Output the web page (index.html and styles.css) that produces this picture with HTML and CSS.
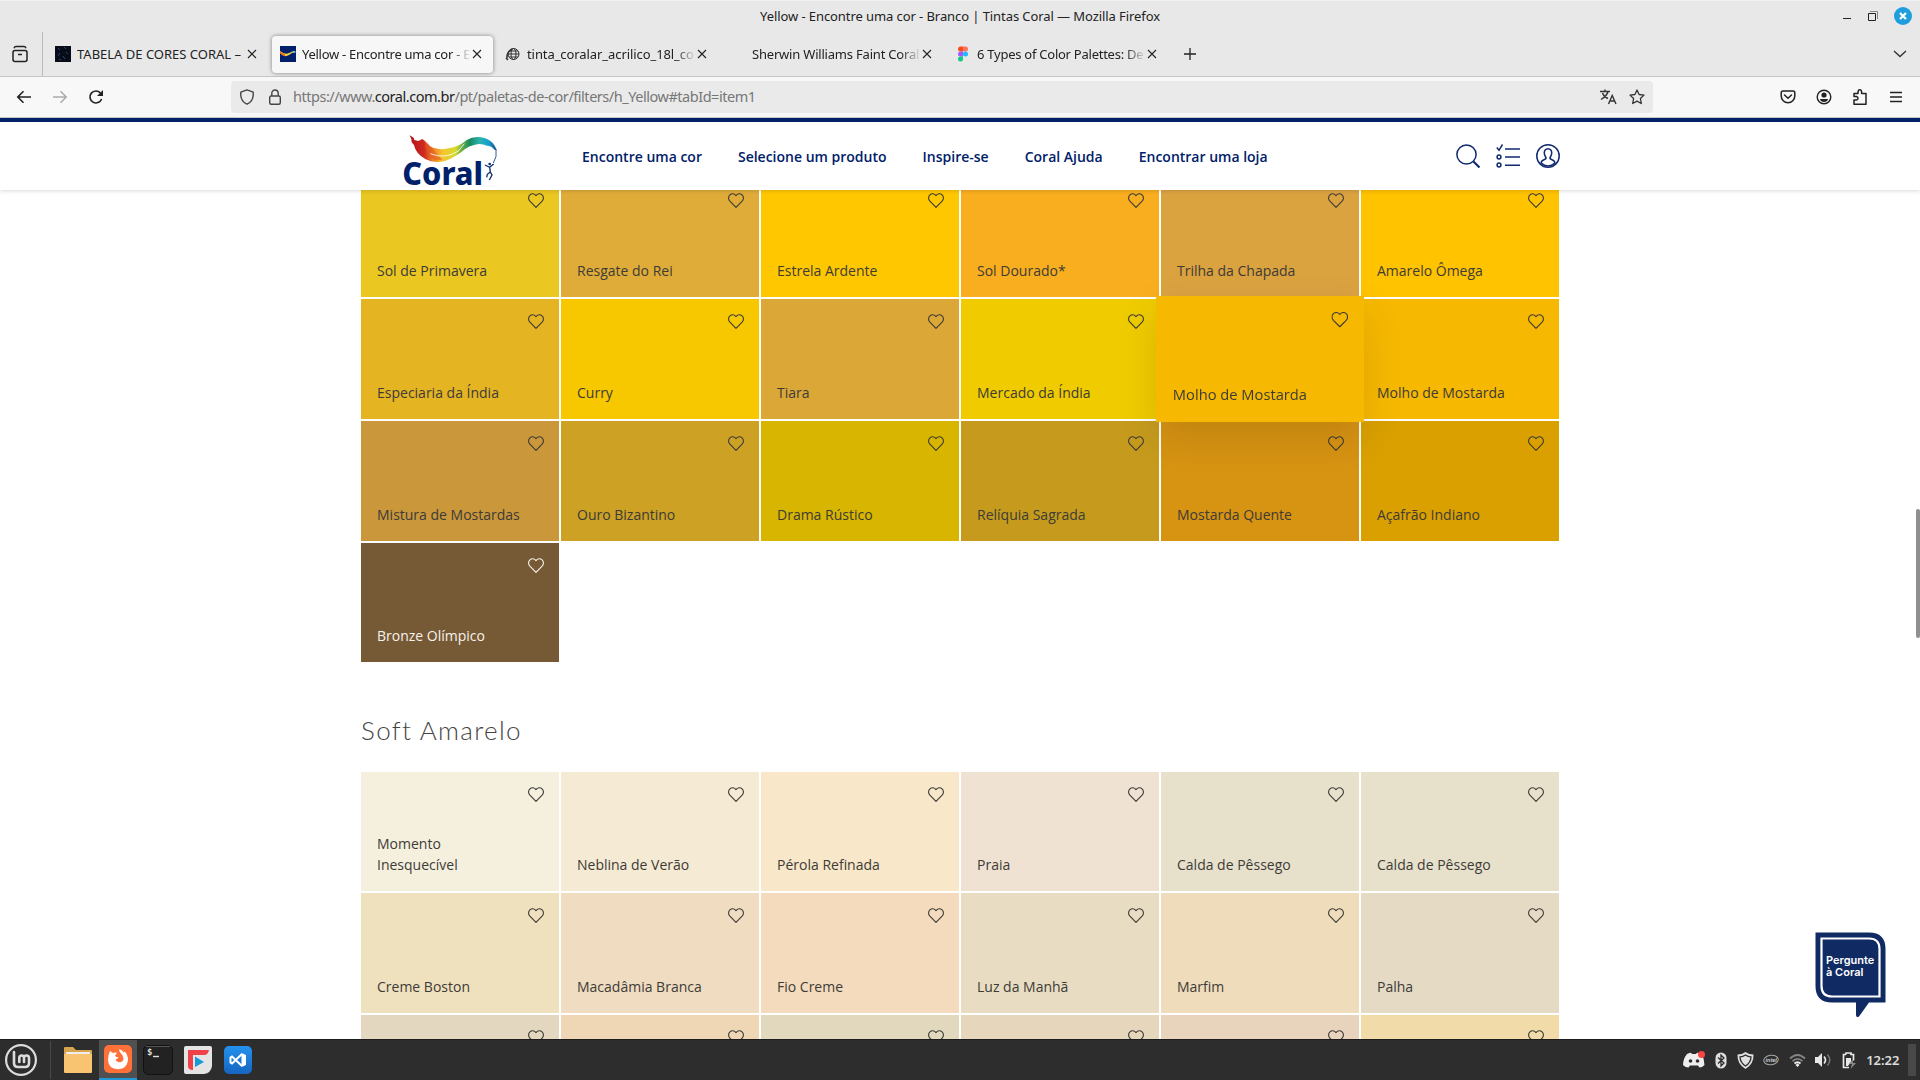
FILE: index.html
```html
<!DOCTYPE html>
<html lang="pt">
<head>
<meta charset="utf-8">
<title>Yellow - Encontre uma cor - Branco | Tintas Coral</title>
<link rel="stylesheet" href="styles.css">
</head>
<body>
<svg class="defs" width="0" height="0">
  <symbol id="heart" viewBox="0 0 16 15"><path d="M8 14.3 1.9 8.2C.1 6.300 .2 3.300 1.900 1.800 3.700 .2 6.500 .3 8 2.600 9.500 .3 12.300 .2 14.100 1.800 15.800 3.300 15.900 6.300 14.100 8.200Z" fill="none" stroke="currentColor" stroke-width="1.100" stroke-linejoin="round"/></symbol>
  <symbol id="close" viewBox="0 0 10 10"><path d="M1 1l8 8M9 1l-8 8" stroke="currentColor" stroke-width="1.100" fill="none"/></symbol>
</svg>

<header class="titlebar">
  <span class="window-title">Yellow - Encontre uma cor - Branco | Tintas Coral — Mozilla Firefox</span>
  <div class="window-buttons">
    <svg width="10" height="12" viewBox="0 0 10 12"><path d="M1 8.500h8" stroke="#222"/></svg>
    <svg width="12" height="12" viewBox="0 0 12 12"><path d="M1.500 3.500h7v7h-7z" fill="none" stroke="#222"/><path d="M3 1.500h7.500V9" fill="none" stroke="#888"/></svg>
    <svg width="18" height="18" viewBox="0 0 18 18"><circle cx="9" cy="9" r="9" fill="#1f9ede"/><path d="M6 6l6 6M12 6l-6 6" stroke="#fff" stroke-width="2.200"/></svg>
  </div>
</header>

<nav class="tabs">
  <div class="firefox-view">
    <svg width="16" height="18" viewBox="0 0 16 18"><rect x="1" y="5.500" width="14" height="11" rx="2" fill="none" stroke="#222" stroke-width="1.500"/><path d="M2 3.200Q2.500 1.500 4 1.500h8q1.500 0 2 1.700M6 9.500h4" stroke="#222" stroke-width="1.400" fill="none"/></svg>
  </div>
  <div class="tab">
    <svg class="favicon" viewBox="0 0 16 16"><path fill="#080c18" d="M0 0h16v16H0z"/><path d="M3 2l2 2M9 1l2 2M5 7l-2 3M11 6l2 2M8 10l2 3M4 13l2 1" stroke="#294567"/></svg>
    <span class="tab-label t1">TABELA DE CORES CORAL –</span><svg class="x"><use href="#close"/></svg>
  </div>
  <div class="tab active">
    <svg class="favicon" viewBox="0 0 16 16"><path fill="#00206a" d="M0 0h16v16H0z"/><path d="M0 5q5 4 9 2 4-2 7-1-4 0-7 3-5 3-9-2z" fill="#ffd23a"/><path d="M0 5q2 3 5 3l0 2Q2 10 0 7z" fill="#f06b22"/><path d="M11 6q3-2 5 0l-2 1z" fill="#6fc8c7"/></svg>
    <span class="tab-label t2">Yellow - Encontre uma cor - E</span><svg class="x"><use href="#close"/></svg>
  </div>
  <div class="tab">
    <svg class="favicon" viewBox="0 0 16 16"><g fill="none" stroke="#333"><circle cx="8.500" cy="8" r="5.500"/><ellipse cx="8.500" cy="8" rx="2.500" ry="5.500"/><path d="M3 8h11M4 5h9M4 11h9"/><path d="M2 13Q1 7 7 3M1 12l2 2" stroke-width="1.500"/></g></svg>
    <span class="tab-label t3">tinta_coralar_acrilico_18l_co</span><svg class="x"><use href="#close"/></svg>
  </div>
  <div class="tab">
    <span class="favicon"></span>
    <span class="tab-label t4">Sherwin Williams Faint Coral</span><svg class="x"><use href="#close"/></svg>
  </div>
  <div class="tab">
    <svg class="favicon" viewBox="0 0 16 16"><path d="M8 .5H5.500a2.500 2.500 0 000 5H8z" fill="#f24e1e"/><path d="M8 .5h2.500a2.500 2.500 0 010 5H8z" fill="#ff7262"/><path d="M8 5.500H5.500a2.500 2.500 0 000 5H8z" fill="#a259ff"/><circle cx="10.500" cy="8" r="2.500" fill="#1abcfe"/><path d="M8 10.500H5.500A2.500 2.500 0 108 13z" fill="#0acf83"/></svg>
    <span class="tab-label t5">6 Types of Color Palettes: De</span><svg class="x"><use href="#close"/></svg>
  </div>
  <svg class="new-tab" width="12" height="12" viewBox="0 0 12 12"><path d="M6 0v12M0 6h12" stroke="#222" stroke-width="1.300"/></svg>
  <svg class="tab-list" width="14" height="8" viewBox="0 0 14 8"><path d="M1 1l6 5.500L13 1" stroke="#333" stroke-width="1.400" fill="none"/></svg>
</nav>

<div class="toolbar">
  <div class="history">
    <svg width="16" height="16" viewBox="0 0 16 16"><path d="M15 8H2M7.500 2.300L1.800 8l5.700 5.700" fill="none" stroke="#222" stroke-width="1.600"/></svg>
    <svg width="16" height="16" viewBox="0 0 16 16"><path d="M1 8h13M8.500 2.300L14.200 8l-5.700 5.700" fill="none" stroke="#aaa" stroke-width="1.500"/></svg>
    <svg width="16" height="16" viewBox="0 0 16 16"><path d="M13.600 10A6 6 0 1 1 12.500 4" fill="none" stroke="#222" stroke-width="1.600"/><path d="M15 1v6H9z" fill="#222"/></svg>
  </div>
  <div class="urlbar">
    <svg width="16" height="16" viewBox="0 0 16 16"><path d="M8 .9L14.200 3.200V6.500Q13.800 12.500 8 15.200 2.200 12.500 1.800 6.500V3.200z" fill="none" stroke="#444" stroke-width="1.400" stroke-linejoin="round"/></svg>
    <svg width="16" height="16" viewBox="0 0 16 16"><rect x="2.700" y="7" width="10.600" height="8.200" rx="1.500" fill="none" stroke="#444" stroke-width="1.400"/><path d="M4.800 7V4.200a3.200 3.200 0 016.400 0V7" fill="none" stroke="#444" stroke-width="1.400"/></svg>
    <span class="url">https://www.<b>coral.com.br</b>/pt/paletas-de-cor/filters/h_Yellow#tabId=item1</span>
    <svg width="17" height="16" viewBox="0 0 17 16"><path d="M0 2.500h10M5 .5v2M8 2.500Q7 7 1 10.500M2.500 4Q4 8 8 9.500M8.500 15l3.700-8.500L16 15M9.800 12h5" fill="none" stroke="#333" stroke-width="1.400"/></svg>
    <svg width="16" height="16" viewBox="0 0 16 16"><path d="M8 1l2.100 4.500 4.900.6-3.600 3.400.9 5L8 12.100l-4.300 2.400.9-5L1 6.100l4.900-.6z" fill="none" stroke="#333" stroke-width="1.300" stroke-linejoin="round"/></svg>
  </div>
  <div class="tools">
    <svg width="16" height="16" viewBox="0 0 16 16"><path d="M3 2h10q1.800 0 1.800 1.800V7A6.800 6.800 0 011.200 7V3.800Q1.200 2 3 2zM4.500 6L8 9.300 11.500 6" fill="none" stroke="#222" stroke-width="1.500" stroke-linecap="round"/></svg>
    <svg width="16" height="16" viewBox="0 0 16 16"><circle cx="8" cy="8" r="6.800" fill="none" stroke="#222" stroke-width="1.400"/><circle cx="8" cy="6" r="2.600" fill="#222"/><path d="M3.800 10h8.400q-1 3-4.200 3T3.800 10z" fill="#222"/></svg>
    <svg width="16" height="16" viewBox="0 0 16 16"><path d="M2 15.200V11h2.500q1.500-.3 1.500-1.700T4.500 7.500H2V4.500h4V2.600q.3-1.800 1.800-1.800t1.800 1.800v1.900H14v10.700z" fill="none" stroke="#222" stroke-width="1.500" stroke-linejoin="round"/></svg>
    <svg width="16" height="16" viewBox="0 0 16 16"><path d="M2 3.500h12M2 8h12M2 12.500h12" stroke="#222" stroke-width="1.300"/></svg>
  </div>
</div>

<main class="page">
  <header class="site-header">
    <div class="site-inner">
      <svg class="logo" width="95" height="52" viewBox="24 27 285 156">
        <defs>
          <linearGradient id="ribbon" x1="45" x2="215" y1="0" y2="0" gradientUnits="userSpaceOnUse"><stop offset="0" stop-color="#b5121b"/><stop offset=".25" stop-color="#cf2a20"/><stop offset=".4" stop-color="#ef7d22"/><stop offset=".58" stop-color="#f7c52d"/><stop offset=".8" stop-color="#d5dc2e"/><stop offset="1" stop-color="#6aa83c"/></linearGradient>
          <linearGradient id="wave" x1="190" x2="305" y1="0" y2="0" gradientUnits="userSpaceOnUse"><stop offset="0" stop-color="#8ebf3c"/><stop offset=".3" stop-color="#178a5f"/><stop offset=".55" stop-color="#2bb3ad"/><stop offset=".8" stop-color="#149fd0"/><stop offset="1" stop-color="#164a86"/></linearGradient>
        </defs>
        <path d="M44 31L56 38 58 45 70 48 82 42 90 48 104 64Q128 78 160 70 190 64 216 47L207 74Q182 96 152 107 118 116 92 103 62 86 57 60L50 52 49 42Z" fill="url(#ribbon)"/>
        <path d="M88 48Q102 56 112 70 124 90 142 104L120 106Q94 92 88 48Z" fill="#e35a24" opacity=".6"/>
        <path d="M186 74Q212 34 252 36 294 40 305 76L298 74Q290 62 276 62 258 54 240 59 222 62 206 75 196 84 183 90 192 80 196 72Z" fill="url(#wave)"/>
        <path d="M106 86Q150 104 190 78L208 56" fill="none" stroke="#fff" stroke-width="2.500"/>
        <path d="M303 72Q307 96 295 114" fill="none" stroke="#2b5a8c" stroke-width="3"/>
        <path d="M270 120l14 7 12-10M284 127l2 14-9 7-2 9M286 141l5 9-8 15" fill="none" stroke="#0a2c70" stroke-width="4"/><circle cx="284" cy="117" r="4" fill="#0a2c70"/>
        <text x="22" y="180" class="logo-text" textLength="242" lengthAdjust="spacingAndGlyphs">Coral</text>
      </svg>
      <nav class="menu"><a>Encontre uma cor</a><a>Selecione um produto</a><a>Inspire-se</a><a>Coral Ajuda</a><a>Encontrar uma loja</a></nav>
      <div class="site-icons">
        <svg width="24" height="24" viewBox="0 0 24 24"><circle cx="10.500" cy="10.500" r="9.600"/><path d="M17.500 17.500l6 6" stroke-width="2.200"/></svg>
        <svg width="24" height="24" viewBox="0 0 24 24"><path d="M.8 3.500l2.200 2.800L6.500.5M9 5h15M9 13h15M9 21.200h15"/><circle cx="3" cy="13" r="1.900"/><circle cx="3" cy="21" r="1.900"/></svg>
        <svg width="24" height="24" viewBox="0 0 24 24"><circle cx="12" cy="12" r="11.200"/><path d="M12 4.800c-2.500 0-3.800 2-3.700 4.300.1 2.400 1.200 3.600 1.700 4.600.3 1-.6 1.600-2 2-2 .6-3 1-3 3.800M12 4.800c2.500 0 3.800 2 3.700 4.300-.1 2.400-1.200 3.600-1.700 4.600-.3 1 .6 1.600 2 2 2 .6 3 1 3 3.800M5 19.200q7 5.600 14 0"/></svg>
      </div>
    </div>
  </header>

  <div class="content">
    <section class="palette">
      <article class="tile" style="--c:#ebc722"><svg><use href="#heart"/></svg><span>Sol de Primavera</span></article>
      <article class="tile" style="--c:#e0ac39"><svg><use href="#heart"/></svg><span>Resgate do Rei</span></article>
      <article class="tile" style="--c:#ffc700"><svg><use href="#heart"/></svg><span>Estrela Ardente</span></article>
      <article class="tile" style="--c:#f8ae1e"><svg><use href="#heart"/></svg><span>Sol Dourado*</span></article>
      <article class="tile" style="--c:#dba240"><svg><use href="#heart"/></svg><span>Trilha da Chapada</span></article>
      <article class="tile" style="--c:#ffc300"><svg><use href="#heart"/></svg><span>Amarelo Ômega</span></article>
      <article class="tile" style="--c:#e5b423"><svg><use href="#heart"/></svg><span>Especiaria da Índia</span></article>
      <article class="tile" style="--c:#f7c800"><svg><use href="#heart"/></svg><span>Curry</span></article>
      <article class="tile" style="--c:#dba838"><svg><use href="#heart"/></svg><span>Tiara</span></article>
      <article class="tile" style="--c:#efcb00"><svg><use href="#heart"/></svg><span>Mercado da Índia</span></article>
      <article class="tile raised" style="--c:#f6b800"><svg><use href="#heart"/></svg><span>Molho de Mostarda</span></article>
      <article class="tile" style="--c:#f6b800"><svg><use href="#heart"/></svg><span>Molho de Mostarda</span></article>
      <article class="tile" style="--c:#ca973b"><svg><use href="#heart"/></svg><span>Mistura de Mostardas</span></article>
      <article class="tile" style="--c:#cca124"><svg><use href="#heart"/></svg><span>Ouro Bizantino</span></article>
      <article class="tile" style="--c:#d8b500"><svg><use href="#heart"/></svg><span>Drama Rústico</span></article>
      <article class="tile" style="--c:#c69b1d"><svg><use href="#heart"/></svg><span>Relíquia Sagrada</span></article>
      <article class="tile" style="--c:#d79312"><svg><use href="#heart"/></svg><span>Mostarda Quente</span></article>
      <article class="tile" style="--c:#daa000"><svg><use href="#heart"/></svg><span>Açafrão Indiano</span></article>
      <article class="tile dark" style="--c:#765935"><svg><use href="#heart"/></svg><span>Bronze Olímpico</span></article>
    </section>
    <h2>Soft Amarelo</h2>
    <section class="palette">
      <article class="tile" style="--c:#f5f0de"><svg><use href="#heart"/></svg><span>Momento Inesquecível</span></article>
      <article class="tile" style="--c:#f5ead3"><svg><use href="#heart"/></svg><span>Neblina de Verão</span></article>
      <article class="tile" style="--c:#f8e7c9"><svg><use href="#heart"/></svg><span>Pérola Refinada</span></article>
      <article class="tile" style="--c:#f0e2d3"><svg><use href="#heart"/></svg><span>Praia</span></article>
      <article class="tile" style="--c:#e7e1cc"><svg><use href="#heart"/></svg><span>Calda de Pêssego</span></article>
      <article class="tile" style="--c:#e7e1cc"><svg><use href="#heart"/></svg><span>Calda de Pêssego</span></article>
      <article class="tile" style="--c:#f0e1be"><svg><use href="#heart"/></svg><span>Creme Boston</span></article>
      <article class="tile" style="--c:#efdcc1"><svg><use href="#heart"/></svg><span>Macadâmia Branca</span></article>
      <article class="tile" style="--c:#f4dbbd"><svg><use href="#heart"/></svg><span>Fio Creme</span></article>
      <article class="tile" style="--c:#e8ddc2"><svg><use href="#heart"/></svg><span>Luz da Manhã</span></article>
      <article class="tile" style="--c:#efdcbb"><svg><use href="#heart"/></svg><span>Marfim</span></article>
      <article class="tile" style="--c:#e5dac4"><svg><use href="#heart"/></svg><span>Palha</span></article>
      <article class="tile" style="--c:#e3d7bf"><svg><use href="#heart"/></svg></article>
      <article class="tile" style="--c:#efd7b5"><svg><use href="#heart"/></svg></article>
      <article class="tile" style="--c:#e2d8bd"><svg><use href="#heart"/></svg></article>
      <article class="tile" style="--c:#e6d6bb"><svg><use href="#heart"/></svg></article>
      <article class="tile" style="--c:#e8d3bd"><svg><use href="#heart"/></svg></article>
      <article class="tile" style="--c:#f1dca9"><svg><use href="#heart"/></svg></article>
    </section>
  </div>

  <div class="chat">
    <svg width="72" height="86" viewBox="0 0 72 86"><path d="M.5 .5H54Q70.500 .5 70.500 17V70.500H54L44 84.500Q41 86 41 83V70.500H17Q.5 70.500 .5 54z" fill="#102a63"/><path d="M6.500 6.500H54Q64.500 6.500 64.500 17V64.500H17Q6.500 64.500 6.500 54z" fill="none" stroke="#fff" stroke-width="2.200"/></svg>
    <span class="chat-text">Pergunte<br>à Coral</span>
  </div>
  <div class="scroll-thumb"></div>
</main>

<footer class="taskbar">
  <svg class="mint" width="32" height="32" viewBox="0 0 32 32"><circle cx="16" cy="16" r="14.900" fill="none" stroke="#dcdcdc" stroke-width="2.200"/><path d="M9 8v11q0 4 4 4h7q4 0 4-4v-5q0-2.500-2.500-2.500T19 14v4M19 14q0-2.500-2.300-2.500T14.300 14v4" fill="none" stroke="#dcdcdc" stroke-width="2.600" stroke-linecap="round"/></svg>
  <i class="separator"></i>
  <div class="launcher"><svg width="28" height="26" viewBox="0 0 28 26"><path d="M0 1q0-1 1-1h8l3 3h15q1 0 1 1v8H0z" fill="#d9a54c"/><path d="M2 5h24v3H2z" fill="#eee"/><path d="M0 7h28v18q0 1-1 1H1q-1 0-1-1z" fill="#f8c471"/></svg></div>
  <div class="launcher current"><svg width="28" height="28" viewBox="0 0 28 28"><rect width="28" height="28" rx="5" fill="#ff7139"/><path d="M6 6l3 2q2-.8 4-.2l-2 3q1 1.500 3.500 1.500 0 1.500-3 2 1 3 4 3 4-.3 4-4 0-3-3-5.300-2-1.800-1-4 3 1.300 4.200 3.500l1-1Q24 10 24 15q-1 9-10 9.300Q4.500 24 4 15q0-5 2-9z" fill="#fff"/></svg></div>
  <div class="launcher"><svg width="30" height="30" viewBox="0 0 30 30"><rect x=".5" y=".5" width="29" height="29" rx="5" fill="#222" stroke="#111"/><path d="M3 1.500h24" stroke="#555"/><path d="M10 11.500h6" stroke="#ddd" stroke-width="1.400"/><text x="4" y="10" class="prompt">$</text></svg></div>
  <div class="launcher"><svg width="28" height="28" viewBox="0 0 28 28"><path d="M2 0h24q2 0 2 2v18q-1 7-8 8H2q-2 0-2-2V2Q0 0 2 0z" fill="#e4e4e4"/><path d="M4 4h21q-1 5-5 5H4z" fill="#f04048"/><path d="M4 8h5v16q-5 0-5-4z" fill="#f04048"/><path d="M11 10.500l9 5.500-9 5z" fill="#189ad8"/></svg></div>
  <div class="launcher"><svg width="28" height="28" viewBox="0 0 28 28"><defs><linearGradient id="vs" x2="0" y2="1"><stop stop-color="#2492ee"/><stop offset="1" stop-color="#1565c0"/></linearGradient></defs><rect width="28" height="28" rx="5" fill="url(#vs)"/><path d="M18 8L8 17.500 6.500 16.500V11.500L8 10.500 18 20" fill="none" stroke="#fff" stroke-width="2"/><path d="M17.500 7L22 9v10l-4.500 2z" fill="#fff"/></svg></div>
  <div class="tray">
    <svg width="24" height="18" viewBox="0 0 24 18"><path d="M5 3q3-1.300 4-1.300l1 1.300h4l1-1.300q2 0 4.500 1.300 3 5 3 11-2.500 2.500-5 2.500L16 14.500H8L6.500 16.500Q3.500 16.500 1 14 1 8 5 3z" fill="#eee"/><circle cx="8.500" cy="10" r="1.800" fill="#2d2d2d"/><circle cx="15.500" cy="10" r="1.800" fill="#2d2d2d"/><circle cx="19.500" cy="3.500" r="3.500" fill="#f44"/></svg>
    <svg width="12" height="17" viewBox="0 0 12 17"><rect x=".5" y=".5" width="11" height="16" rx="5.500" fill="#e0e0e0"/><path d="M3 5.500l6 5.500-3 3V3l3 3-6 5.500" fill="none" stroke="#2d2d2d" stroke-width="1.300"/></svg>
    <svg width="17" height="17" viewBox="0 0 17 17"><path d="M8.500 0Q12 2.500 16.500 2.500 17 12 8.500 17 0 12 .5 2.500 5 2.500 8.500 0z" fill="#e0e0e0"/><path d="M8.500 3Q11 4.800 14 4.800 14 10.500 8.500 14 3 10.500 3 4.800 6 4.800 8.500 3z" fill="none" stroke="#2d2d2d" stroke-width="1.300"/></svg>
    <svg width="16" height="12" viewBox="0 0 16 12"><ellipse cx="8" cy="6" rx="7.300" ry="4.700" fill="none" stroke="#aaa" transform="rotate(-8 8 6)"/><text x="2.500" y="8.400" class="intel">intel</text></svg>
    <svg width="17" height="16" viewBox="0 0 17 16"><path d="M1 6.500Q8.500-.5 16 6.500M3.500 9.200Q8.500 4.500 13.500 9.200" fill="none" stroke="#858585" stroke-width="1.800"/><path d="M5.500 11.500Q8.500 9 11.500 11.500" fill="none" stroke="#eee" stroke-width="2"/><path d="M6.500 13L8.500 11.500 10.500 13 8.500 15z" fill="#eee"/></svg>
    <svg width="17" height="16" viewBox="0 0 17 16"><path d="M0 5h3l4-4v14l-4-4H0z" fill="#e8e8e8"/><path d="M9 4.500q3 3.500 0 7" fill="none" stroke="#e8e8e8" stroke-width="1.700"/><path d="M12.500 2.500q4.500 5.500 0 11" fill="none" stroke="#777" stroke-width="1.500"/></svg>
    <svg width="15" height="17" viewBox="0 0 15 17"><path d="M4 2.500V1h5v1.500h2.500v6M7 15.500H1.500v-13H4" fill="none" stroke="#e8e8e8" stroke-width="1.700"/><path d="M4 6h5v4l-3 4H4z" fill="#e8e8e8"/><path d="M11 7l-4 5h3l-1.500 5 5.500-6h-3z" fill="#888"/></svg>
    <span class="clock">12:22</span>
    <i class="show-desktop"></i>
  </div>
</footer>
</body>
</html>
```
FILE: styles.css
```css
* { box-sizing: border-box; }
body { margin: 0; width: 1920px; height: 1080px; overflow: hidden; display: flex; flex-direction: column; background: #fff; font-family: "Open Sans", "Noto Sans", sans-serif; color: #222; }
svg { display: block; flex: none; }
.defs { position: absolute; }

.titlebar { flex: none; height: 32px; background: #e8e8e8; border-top: 1px solid #f0f0f0; display: grid; grid-template-columns: 1fr auto 1fr; align-items: center; padding-bottom: 2px; font-family: "Noto Sans", sans-serif; }
.window-title { grid-column: 2; font-size: 13px; letter-spacing: -0.08px; white-space: nowrap; }
.window-buttons { display: flex; justify-content: flex-end; align-items: center; gap: 15px; padding-right: 8px; }

.tabs { flex: none; height: 45px; background: #e8e8e8; border-bottom: 1px solid #c6c6c6; display: flex; align-items: center; gap: 4px; font-family: "Noto Sans", sans-serif; }
.firefox-view { width: 43px; height: 44px; border-right: 1px solid #bbb; display: flex; align-items: center; padding-left: 12px; }
.tab { flex: none; width: 221px; height: 37px; border-radius: 4px; display: flex; align-items: center; padding-left: 8px; }
.tab.active { background: #f7f7f7; box-shadow: 0 0 4px rgba(0,0,0,.45); }
.favicon { flex: none; width: 16px; height: 16px; margin-right: 6px; }
.tab-label { width: 169px; overflow: hidden; white-space: nowrap; font-size: 13px; }
.t2, .t3, .t4, .t5 { -webkit-mask-image: linear-gradient(90deg, #000 88%, transparent); mask-image: linear-gradient(90deg, #000 88%, transparent); }
.t1 { letter-spacing: 0; }
.t2 { letter-spacing: -0.27px; }
.t3 { letter-spacing: -0.08px; }
.t4 { letter-spacing: -0.2px; }
.t5 { letter-spacing: -0.25px; }
.x { width: 10px; height: 10px; margin-left: 1px; }
.new-tab { margin-left: 12px; }
.tab-list { margin-left: auto; margin-right: 13px; }

.toolbar { flex: none; height: 40px; background: #f8f8f8; display: flex; align-items: center; }
.history { width: 231px; display: flex; gap: 20px; padding-left: 16px; }
.urlbar { width: 1422px; height: 32px; border-radius: 4px; background: #eaeaea; display: flex; align-items: center; gap: 12px; padding: 0 8px; }
.url { flex: 1; font-family: "Noto Sans", sans-serif; font-size: 14.500px; letter-spacing: -0.47px; color: #777; margin-left: -2px; padding-bottom: 2px; white-space: nowrap; }
.url b { font-weight: 400; color: #222; }
.tools { margin-left: auto; display: flex; gap: 20px; padding-right: 16px; }

.page { position: relative; flex: 1; min-height: 0; display: flex; flex-direction: column; border-top: 1px solid #c8c8c8; overflow: hidden; }
.site-header { position: relative; z-index: 3; flex: none; height: 72px; background: #fff; border-top: 4px solid #00206a; box-shadow: 0 1px 4px rgba(0,0,0,.15); }
.site-inner { width: 1200px; height: 68px; margin: 0 auto; display: flex; align-items: center; padding-left: 43px; }
.logo { margin-top: 7px; }
.logo-text { font-family: "Noto Sans", sans-serif; font-weight: 800; font-size: 96px; fill: #00206a; }
.menu { display: flex; gap: 36px; margin-left: 84px; font-size: 14px; font-weight: 600; color: #00206a; white-space: nowrap; }
.site-icons { margin-left: auto; display: flex; gap: 16px; }
.site-icons svg { fill: none; stroke: #102a6e; stroke-width: 1.500; }

.content { flex: 1; min-height: 0; width: 1198px; margin: -12.3px auto 0; }
.palette { display: grid; grid-template-columns: repeat(6, 198px); grid-auto-rows: 119.670px; gap: 2px; }
.tile { position: relative; display: flex; flex-direction: column; justify-content: space-between; padding: 15px 16px 16px; background: var(--c); color: #3d3b37; font-size: 14px; line-height: 21px; }
.tile svg { width: 16px; height: 15px; align-self: flex-end; margin-right: -1px; }
.tile span { max-width: 145px; }
.tile.dark { color: #f7f3ec; }
.tile.raised { transform: scale(1.05); z-index: 2; box-shadow: 0 14px 40px rgba(0,0,0,.11); }
h2 { margin: 0; height: 109.200px; padding-top: 52px; font-family: Lato, sans-serif; font-weight: 300; font-size: 26px; line-height: 32px; letter-spacing: 1.350px; color: #444; }

.chat { position: absolute; z-index: 4; left: 1815px; top: 814px; }
.chat-text { position: absolute; left: 11px; top: 23px; font: 600 11px/11.500px Inter, sans-serif; color: #fff; white-space: nowrap; }
.scroll-thumb { position: absolute; right: 0; top: 391px; width: 4px; height: 129px; border-radius: 2px; background: #8f8f8f; }

.taskbar { flex: none; height: 41px; background: #2d2d2d; border-top: 1px solid #1c1c1c; display: flex; align-items: center; }
.mint { margin-left: 5px; }
.separator { width: 1px; height: 38px; background: #484848; margin: 0 8px 0 13px; }
.launcher { width: 38px; height: 40px; margin-right: 2px; display: flex; align-items: center; justify-content: center; }
.current { background: #505050; border-bottom: 2px solid #2196d8; }
.prompt { font: bold 9px "DejaVu Sans Mono", monospace; fill: #ddd; }
.tray { margin-left: auto; display: flex; align-items: center; gap: 9.500px; }
.intel { font: italic bold 5.500px "Liberation Sans", sans-serif; fill: #ccc; }
.clock { font: 600 13px "Noto Sans", sans-serif; color: #ddd; margin-right: -1px; }
.show-desktop { width: 8px; height: 32px; background: #484848; margin-right: 4px; }
```
